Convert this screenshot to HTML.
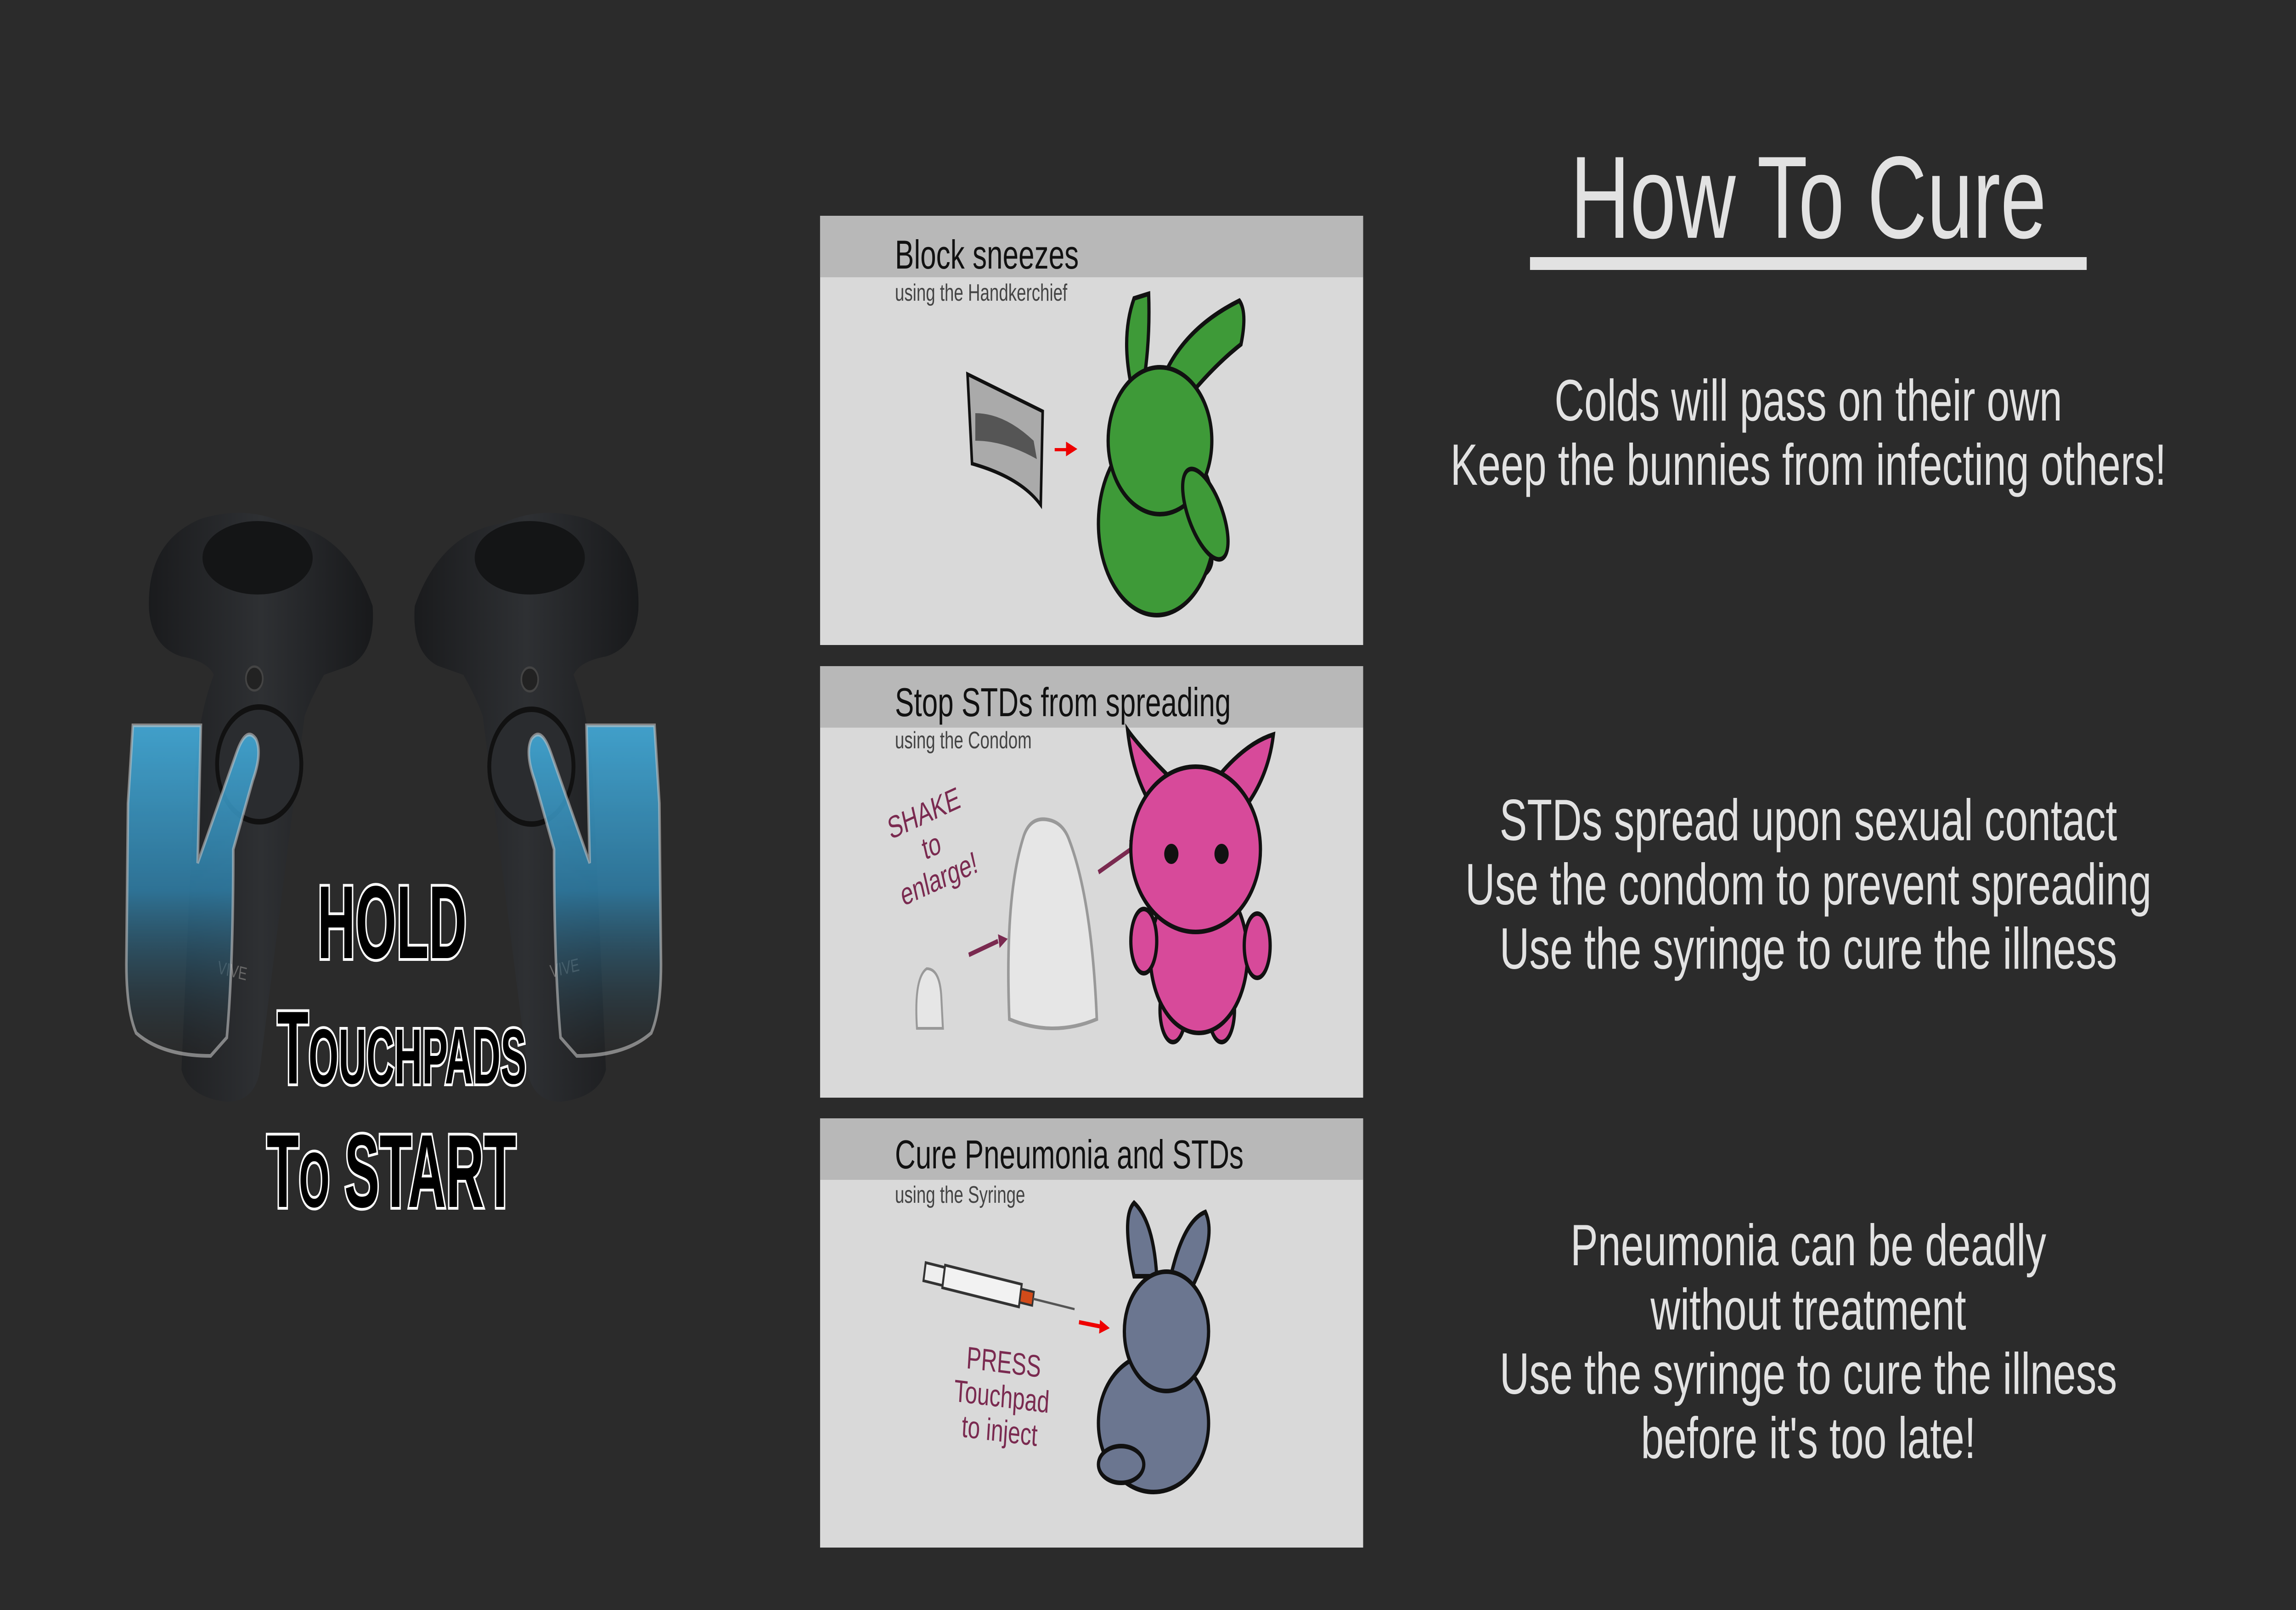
<!DOCTYPE html>
<html><head><meta charset="utf-8"><style>
html,body{margin:0;padding:0;background:#2b2b2b;width:100%;height:100%;overflow:hidden;}
svg{display:block;position:fixed;left:0;top:0;width:100vw;height:100vh}
</style></head><body>
<svg viewBox="0 0 7086 3507" preserveAspectRatio="none" xmlns="http://www.w3.org/2000/svg">
<defs>
<linearGradient id="hand" x1="0" y1="0" x2="0" y2="1">
<stop offset="0" stop-color="#45b4e6"/><stop offset="0.5" stop-color="#2f7fa8"/><stop offset="1" stop-color="#2b2b2b" stop-opacity="0.3"/>
</linearGradient>
<linearGradient id="ctl" x1="0" y1="0" x2="1" y2="0">
<stop offset="0" stop-color="#1a1b1d"/><stop offset="0.5" stop-color="#2e3033"/><stop offset="1" stop-color="#18191b"/>
</linearGradient>
</defs>
<rect width="7086" height="3507" fill="#2b2b2b"/>

<!-- Left controller -->
<g>
<path d="M460 1330 Q450 1180 620 1130 Q760 1100 880 1140 Q1070 1160 1150 1320 Q1160 1420 1080 1450 L1000 1470 Q960 1520 940 1560 L800 2340 Q780 2400 700 2400 Q580 2390 560 2330 L600 1700 Q610 1560 660 1470 Q640 1440 560 1430 Q470 1410 460 1330Z" fill="url(#ctl)"/>
<ellipse cx="795" cy="1215" rx="170" ry="80" fill="#141516"/>
<ellipse cx="800" cy="1665" rx="130" ry="125" fill="#2a2c2f" stroke="#111" stroke-width="12"/>
<circle cx="785" cy="1478" r="26" fill="#222" stroke="#444" stroke-width="5"/>
<text x="670" y="2120" font-family="Liberation Sans" font-size="40" fill="#666" transform="rotate(10 670 2120)">VIVE</text>
<path d="M410 1580 L620 1580 L610 1880 L730 1640 Q760 1580 790 1610 Q810 1640 780 1700 L720 1850 Q720 2100 700 2260 L650 2300 Q500 2300 420 2250 Q390 2200 390 2100 L395 1750 Z" fill="url(#hand)" opacity="0.85" stroke="#ddd" stroke-width="8" stroke-opacity="0.6"/>
</g>
<!-- Right controller -->
<g>
<path d="M1970 1330 Q1980 1180 1810 1130 Q1670 1100 1550 1140 Q1360 1160 1280 1320 Q1270 1420 1350 1450 L1430 1470 Q1470 1520 1490 1560 L1630 2340 Q1650 2400 1730 2400 Q1850 2390 1870 2330 L1830 1700 Q1820 1560 1770 1470 Q1790 1440 1870 1430 Q1960 1410 1970 1330Z" fill="url(#ctl)"/>
<ellipse cx="1635" cy="1215" rx="170" ry="80" fill="#141516"/>
<ellipse cx="1640" cy="1670" rx="130" ry="125" fill="#2a2c2f" stroke="#111" stroke-width="12"/>
<circle cx="1635" cy="1480" r="26" fill="#222" stroke="#444" stroke-width="5"/>
<text x="1700" y="2130" font-family="Liberation Sans" font-size="40" fill="#666" transform="rotate(-10 1700 2130)">VIVE</text>
<path d="M2020 1580 L1810 1580 L1820 1880 L1700 1640 Q1670 1580 1640 1610 Q1620 1640 1650 1700 L1710 1850 Q1710 2100 1730 2260 L1780 2300 Q1930 2300 2010 2250 Q2040 2200 2040 2100 L2035 1750 Z" fill="url(#hand)" opacity="0.85" stroke="#ddd" stroke-width="8" stroke-opacity="0.6"/>
</g>
<!-- Start text -->
<g font-family="Liberation Sans, sans-serif" font-weight="bold" fill="#000" stroke="#fff" stroke-width="12" paint-order="stroke" text-anchor="middle">
<text x="0" y="2087" font-size="226" transform="translate(1210,0) scale(0.72,1)">HOLD</text>
<text x="0" y="2360" font-size="226" transform="translate(1240,0) scale(0.7,1)"><tspan>T</tspan><tspan font-size="170">OUCHPADS</tspan></text>
<text x="0" y="2629" font-size="226" transform="translate(1208,0) scale(0.72,1)"><tspan>T</tspan><tspan font-size="170">O</tspan> START</text>
</g>

<!-- Panel 1 -->
<rect x="2531" y="470" width="1676" height="935" fill="#d9d9d9"/>
<rect x="2531" y="470" width="1676" height="134" fill="#b8b8b8"/>
<text x="2762" y="585" font-family="Liberation Sans" font-size="88" fill="#111">Block sneezes</text>
<text x="2762" y="655" font-family="Liberation Sans" font-size="52" fill="#444">using the Handkerchief</text>
<path d="M2986 815 L3218 896 L3212 1100 Q3150 1040 3000 1010 Z" fill="#aaa" stroke="#111" stroke-width="8"/>
<path d="M3010 900 Q3100 900 3190 960 L3200 1000 Q3100 960 3010 960Z" fill="#555"/>
<path d="M3255 976 L3290 976 L3290 962 L3325 978 L3290 994 L3290 983 L3255 983Z" fill="#e00"/>
<g fill="#3e9a38" stroke="#111" stroke-width="10">
<path d="M3490 835 Q3460 730 3500 650 L3545 640 Q3550 740 3530 830Z"/>
<path d="M3580 840 Q3640 720 3825 655 Q3850 680 3830 750 Q3740 800 3650 880Z"/>
<ellipse cx="3680" cy="1220" rx="60" ry="40"/>
<ellipse cx="3570" cy="1140" rx="180" ry="200"/>
<ellipse cx="3580" cy="960" rx="160" ry="160"/>
<ellipse cx="3720" cy="1120" rx="50" ry="110" transform="rotate(-30 3720 1120)"/>
</g>

<!-- Panel 2 -->
<rect x="2531" y="1451" width="1676" height="940" fill="#d9d9d9"/>
<rect x="2531" y="1451" width="1676" height="134" fill="#b8b8b8"/>
<text x="2762" y="1560" font-family="Liberation Sans" font-size="88" fill="#111">Stop STDs from spreading</text>
<text x="2762" y="1630" font-family="Liberation Sans" font-size="52" fill="#444">using the Condom</text>
<g font-family="Liberation Sans" font-size="68" fill="#7a2a50" text-anchor="middle" transform="rotate(-18 2880 1860)">
<text x="2880" y="1790">SHAKE</text><text x="2880" y="1865">to</text><text x="2880" y="1940">enlarge!</text>
</g>
<path d="M3115 2220 Q3100 1950 3160 1820 Q3180 1780 3230 1785 Q3280 1790 3300 1830 Q3370 1960 3385 2220 Q3250 2260 3115 2220Z" fill="#e6e6e6" stroke="#999" stroke-width="8"/>
<path d="M2830 2240 Q2820 2130 2860 2110 Q2900 2110 2905 2170 L2910 2240Z" fill="#e6e6e6" stroke="#999" stroke-width="6"/>
<path d="M2990 2080 L3080 2050" stroke="#7a2a50" stroke-width="10"/><path d="M3080 2035 L3110 2045 L3085 2065Z" fill="#7a2a50"/>
<path d="M3390 1900 L3490 1850" stroke="#7a2a50" stroke-width="10"/><path d="M3485 1830 L3510 1840 L3495 1868Z" fill="#7a2a50"/>
<g fill="#d74a9a" stroke="#111" stroke-width="10">
<path d="M3620 1700 Q3520 1630 3480 1590 Q3500 1720 3600 1800Z"/>
<path d="M3750 1700 Q3840 1620 3930 1600 Q3910 1720 3790 1800Z"/>
<ellipse cx="3620" cy="2200" rx="40" ry="70"/>
<ellipse cx="3770" cy="2200" rx="40" ry="70"/>
<ellipse cx="3700" cy="2080" rx="150" ry="170"/>
<ellipse cx="3530" cy="2050" rx="40" ry="70"/>
<ellipse cx="3880" cy="2060" rx="40" ry="70"/>
<ellipse cx="3690" cy="1850" rx="200" ry="180"/>
</g>
<circle cx="3615" cy="1860" r="22" fill="#111"/><circle cx="3770" cy="1860" r="22" fill="#111"/>

<!-- Panel 3 -->
<rect x="2531" y="2436" width="1676" height="935" fill="#d9d9d9"/>
<rect x="2531" y="2436" width="1676" height="134" fill="#b8b8b8"/>
<text x="2762" y="2545" font-family="Liberation Sans" font-size="88" fill="#111">Cure Pneumonia and STDs</text>
<text x="2762" y="2620" font-family="Liberation Sans" font-size="52" fill="#444">using the Syringe</text>
<g transform="rotate(10 3080 2810)">
<rect x="2850" y="2790" width="60" height="40" fill="#eee" stroke="#333" stroke-width="6"/>
<rect x="2910" y="2785" width="240" height="50" fill="#f2f2f2" stroke="#333" stroke-width="6"/>
<rect x="3150" y="2795" width="40" height="30" fill="#d24b1a" stroke="#333" stroke-width="5"/>
<line x1="3190" y1="2810" x2="3320" y2="2810" stroke="#555" stroke-width="5"/>
</g>
<path d="M3330 2880 L3400 2890" stroke="#e00" stroke-width="9"/><path d="M3395 2875 L3425 2893 L3392 2905Z" fill="#e00"/>
<g font-family="Liberation Sans" font-size="68" fill="#7a2a50" text-anchor="middle" transform="rotate(5 3090 3060)">
<text x="3090" y="2990">PRESS</text><text x="3090" y="3065">Touchpad</text><text x="3090" y="3140">to inject</text>
</g>
<g fill="#6b7690" stroke="#111" stroke-width="10">
<path d="M3500 2780 Q3460 2650 3500 2620 Q3560 2660 3570 2780Z"/>
<path d="M3610 2790 Q3650 2660 3720 2640 Q3760 2700 3660 2830Z"/>
<ellipse cx="3560" cy="3100" rx="170" ry="150"/>
<ellipse cx="3600" cy="2900" rx="130" ry="130"/>
<ellipse cx="3460" cy="3190" rx="70" ry="40"/>
</g>

<!-- Right side text -->
<g font-family="Liberation Sans, sans-serif" fill="#e2e2e2" text-anchor="middle">
<text x="5581" y="518" font-size="255">How To Cure</text>
<rect x="4722" y="560" width="1718" height="28"/>
<g font-size="127">
<text x="5581" y="916">Colds will pass on their own</text>
<text x="5581" y="1056">Keep the bunnies from infecting others!</text>
<text x="5581" y="1830">STDs spread upon sexual contact</text>
<text x="5581" y="1970">Use the condom to prevent spreading</text>
<text x="5581" y="2110">Use the syringe to cure the illness</text>
<text x="5581" y="2756">Pneumonia can be deadly</text>
<text x="5581" y="2896">without treatment</text>
<text x="5581" y="3036">Use the syringe to cure the illness</text>
<text x="5581" y="3176">before it's too late!</text>
</g>
</g>
</svg>
</body></html>
